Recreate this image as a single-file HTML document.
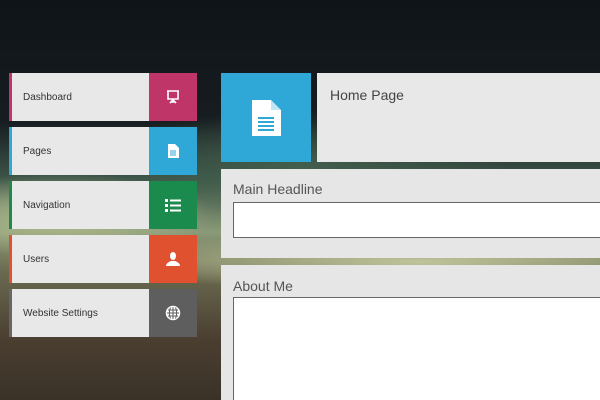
<!DOCTYPE html>
<html style="width:600px;height:400px;overflow:hidden"><head><style>
*{margin:0;padding:0;box-sizing:border-box}
body{width:600px;height:400px;overflow:hidden;position:relative;font-family:"Liberation Sans",sans-serif;
background:
radial-gradient(ellipse 220px 60px at 60px 215px, rgba(190,200,150,.85), rgba(190,200,150,0) 70%),
radial-gradient(ellipse 500px 40px at 420px 262px, rgba(200,205,160,.9), rgba(200,205,160,0) 70%),
radial-gradient(ellipse 300px 80px at 300px 165px, rgba(70,100,80,.8), rgba(70,100,80,0) 70%),
linear-gradient(180deg,#0f1418 0%,#161c20 30%,#3d5548 45%,#8a9a78 58%,#6a6a50 68%,#4a3e30 85%,#3a3228 100%);}
.nav{position:absolute;left:9px;width:188px;height:48px;background:#e8e8e8;}
.nav span{position:absolute;left:14px;top:19px;font-size:10px;color:#333}
.nav .ic{position:absolute;left:140px;top:0;width:48px;height:48px;display:flex;align-items:center;justify-content:center}
.nav::before{content:"";position:absolute;left:0;top:0;width:3px;height:48px;background:var(--c)}
.panel{position:absolute;left:221px;width:379px;background:#e6e6e6;overflow:hidden}
.lbl{position:absolute;left:12px;font-size:14px;color:#555}
.inp{position:absolute;left:12px;right:-2px;background:#fff;border:1px solid #666}
</style></head><body>
<div class="nav" style="top:73px;--c:#c0356a"><span>Dashboard</span><div class="ic" style="background:#bf3567"><svg width="16" height="16" viewBox="0 0 16 16" fill="none" stroke="#fff" stroke-width="1.6"><path d="M2 2h12M3 2v8h10V2M8 10v4M5 14l3-3 3 3"/></svg></div></div>
<div class="nav" style="top:127px;--c:#2fa8d8"><span>Pages</span><div class="ic" style="background:#2fa8d8"><svg width="14" height="16" viewBox="0 0 14 16"><path d="M2 1h7l4 4v10H2z" fill="#fff"/><path d="M4 8h6M4 10h6M4 12h6" stroke="#2fa8d8" stroke-width="1"/></svg></div></div>
<div class="nav" style="top:181px;--c:#1a8a4d"><span>Navigation</span><div class="ic" style="background:#1a8a4d"><svg width="16" height="14" viewBox="0 0 16 14" fill="#fff"><rect x="0" y="1" width="3" height="3"/><rect x="0" y="6" width="3" height="3"/><rect x="0" y="11" width="3" height="3"/><rect x="5" y="1.5" width="11" height="2"/><rect x="5" y="6.5" width="11" height="2"/><rect x="5" y="11.5" width="11" height="2"/></svg></div></div>
<div class="nav" style="top:235px;--c:#e0522f"><span>Users</span><div class="ic" style="background:#e0522f"><svg width="16" height="16" viewBox="0 0 16 16" fill="#fff"><ellipse cx="8" cy="5" rx="3" ry="4"/><path d="M1 15c0-3 3-4 5-5h4c2 1 5 2 5 5z"/></svg></div></div>
<div class="nav" style="top:289px;--c:#666"><span>Website Settings</span><div class="ic" style="background:#5e5e5e"><svg width="16" height="16" viewBox="0 0 16 16" fill="none" stroke="#fff" stroke-width="1.5"><circle cx="8" cy="8" r="6.5" fill="#fff"/><path d="M8 2v12M2 8h12M3 5h10M3 11h10M5.5 2.5c-1.5 3-1.5 8 0 11M10.5 2.5c1.5 3 1.5 8 0 11" stroke="#5e5e5e" stroke-width="1"/></svg></div></div>

<div style="position:absolute;left:221px;top:73px;width:90px;height:89px;background:#2fa8d8;display:flex;align-items:center;justify-content:center"><svg width="32" height="38" viewBox="0 0 32 38"><path d="M2 1h19l10 10v26H2z" fill="#fff"/><path d="M21 1v10h10" fill="#2fa8d8" opacity=".3"/><path d="M8 19h16M8 23h16M8 27h16M8 31h16" stroke="#2fa8d8" stroke-width="2"/></svg></div>
<div style="position:absolute;left:317px;top:73px;width:283px;height:89px;background:#e8e8e8"><span style="position:absolute;left:13px;top:14px;font-size:14px;color:#444">Home Page</span></div>

<div class="panel" style="top:169px;height:89px"><span class="lbl" style="top:12px">Main Headline</span><div class="inp" style="top:33px;height:36px"></div></div>
<div class="panel" style="top:265px;height:135px"><span class="lbl" style="top:13px">About Me</span><div class="inp" style="top:32px;height:120px"></div></div>
</body></html>
